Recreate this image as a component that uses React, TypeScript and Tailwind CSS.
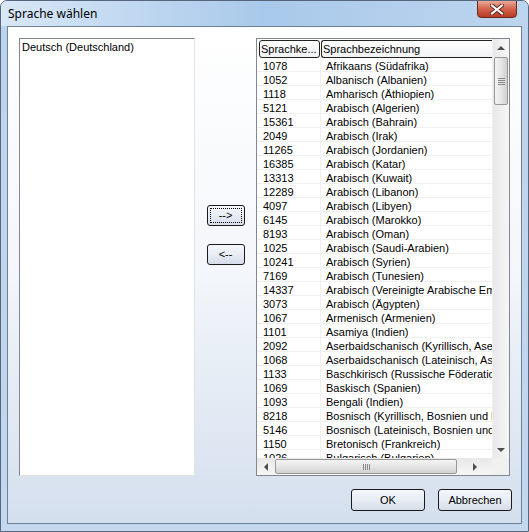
import React from "react";

const rows: [string, string][] = [
  ["1078", "Afrikaans (Südafrika)"],
  ["1052", "Albanisch (Albanien)"],
  ["1118", "Amharisch (Äthiopien)"],
  ["5121", "Arabisch (Algerien)"],
  ["15361", "Arabisch (Bahrain)"],
  ["2049", "Arabisch (Irak)"],
  ["11265", "Arabisch (Jordanien)"],
  ["16385", "Arabisch (Katar)"],
  ["13313", "Arabisch (Kuwait)"],
  ["12289", "Arabisch (Libanon)"],
  ["4097", "Arabisch (Libyen)"],
  ["6145", "Arabisch (Marokko)"],
  ["8193", "Arabisch (Oman)"],
  ["1025", "Arabisch (Saudi-Arabien)"],
  ["10241", "Arabisch (Syrien)"],
  ["7169", "Arabisch (Tunesien)"],
  ["14337", "Arabisch (Vereinigte Arabische Emirate)"],
  ["3073", "Arabisch (Ägypten)"],
  ["1067", "Armenisch (Armenien)"],
  ["1101", "Asamiya (Indien)"],
  ["2092", "Aserbaidschanisch (Kyrillisch, Aserbaidschan)"],
  ["1068", "Aserbaidschanisch (Lateinisch, Aserbaidschan)"],
  ["1133", "Baschkirisch (Russische Föderation)"],
  ["1069", "Baskisch (Spanien)"],
  ["1093", "Bengali (Indien)"],
  ["8218", "Bosnisch (Kyrillisch, Bosnien und H..."],
  ["5146", "Bosnisch (Lateinisch, Bosnien und ..."],
  ["1150", "Bretonisch (Frankreich)"],
  ["1026", "Bulgarisch (Bulgarien)"],
];

const font = { fontFamily: '"Liberation Sans", Arial, sans-serif' };

function WinButton({ label, focus, w, h }: { label: string; focus?: boolean; w: string; h: string }) {
  return (
    <div
      className={`${w} ${h} relative flex items-center justify-center rounded-[3px] border border-[#1a1a1a] bg-linear-to-b from-[#f4f7fb] via-[#e8edf4] to-[#d6dde8] text-[11px] text-black shrink-0`}
    >
      {focus && <div className="absolute inset-[2px] rounded-[1px] border border-dotted border-black" />}
      <span className="relative">{label}</span>
    </div>
  );
}

function Arrow({ dir }: { dir: "up" | "down" | "left" | "right" }) {
  const pts =
    dir === "up"
      ? "0,4 4,0 8,4"
      : dir === "down"
      ? "0,0 8,0 4,4"
      : dir === "left"
      ? "4,0 4,8 0,4"
      : "0,0 0,8 4,4";
  const w = dir === "up" || dir === "down" ? 8 : 4;
  const h = dir === "up" || dir === "down" ? 4 : 8;
  return (
    <svg width={w} height={h} viewBox={`0 0 ${w} ${h}`}>
      <polygon points={pts} fill="#4d4d4d" />
    </svg>
  );
}

export default function App() {
  return (
    <div className="w-[529px] h-[532px] bg-white" style={font}>
      <div className="w-[529px] h-[532px] flex flex-col rounded-t-[7px] border border-[#55667d] bg-linear-to-b from-[#bcd4ec] to-[#c3d7ee] overflow-hidden">
        {/* Title bar */}
        <div className="h-[25px] flex items-start bg-linear-to-r from-[#d8e7f6] via-[#a9c9ea] to-[#bdd5ee] shrink-0">
          <div className="pl-[7px] pt-[5px] text-[12px] text-black leading-[15px]" style={{ fontFamily: '"Noto Sans", "Open Sans", sans-serif' }}>
            Sprache wählen
          </div>
          <div className="flex-1" />
          <div className="mr-[11px] -mt-px w-[40px] h-[18px] rounded-b-[4px] border border-[#6b2a1e] bg-linear-to-b from-[#e9a998] via-[#d2634c] to-[#b83a24] flex items-center justify-center">
            <svg width="14" height="11" viewBox="0 0 14 11">
              <path d="M2 1.5 L12 9.5 M12 1.5 L2 9.5" stroke="#5a2218" strokeWidth="4" strokeLinecap="square" />
              <path d="M2 1.5 L12 9.5 M12 1.5 L2 9.5" stroke="#ffffff" strokeWidth="2.2" strokeLinecap="square" />
            </svg>
          </div>
        </div>

        {/* Client area */}
        <div className="flex-1 mx-[6px] mb-[7px] border border-[#6f8199] bg-linear-to-b from-white via-[#f3f6fa] to-[#d4dfee] flex flex-col pt-[11px] pl-[11px] pr-[9px]">
          <div className="flex h-[438px]">
            {/* Left listbox */}
            <div className="w-[176px] h-full shrink-0 bg-white border border-t-[#828790] border-l-[#828790] border-r-[#e3e3e3] border-b-[#e3e3e3] pl-[2px] pt-[2px] text-[11px] leading-[13px] text-black">
              Deutsch (Deutschland)
            </div>

            {/* Middle buttons */}
            <div className="w-[61px] shrink-0 flex flex-col items-center pt-[167px] gap-[18px]">
              <WinButton label="-->" focus w="w-[38px]" h="h-[21px]" />
              <WinButton label="<--" w="w-[38px]" h="h-[21px]" />
            </div>

            {/* Right listview */}
            <div className="w-[254px] shrink-0 h-full bg-white border border-[#828790] flex flex-col">
              <div className="flex flex-1 min-h-0">
                <div className="w-[235px] flex flex-col overflow-hidden">
                  {/* Header */}
                  <div className="h-[19px] flex items-start pt-px shrink-0 text-[11px] text-black">
                    <div className="w-[64px] shrink-0 pl-[2px] pr-px">
                      <div className="h-[18px] rounded-[3px] border border-[#222] bg-linear-to-b from-white to-[#f1f2f4] pl-[1px] leading-[16px] whitespace-nowrap overflow-hidden">
                        Sprachke...
                      </div>
                    </div>
                    <div className="w-[174px] shrink-0 h-[18px] rounded-l-[3px] border border-r-0 border-[#222] bg-linear-to-b from-white to-[#f1f2f4] pl-px leading-[16px] whitespace-nowrap">
                      Sprachbezeichnung
                    </div>
                  </div>
                  {/* Rows */}
                  <div className="flex-1 overflow-hidden">
                    {rows.map(([code, name]) => (
                      <div key={code} className="h-[14px] flex border-b border-[#f0f0f0] text-[11px] leading-[16px] text-black whitespace-nowrap">
                        <div className="w-[64px] pl-[6px] border-r border-[#f0f0f0] shrink-0">{code}</div>
                        <div className="pl-[5px] overflow-x-clip">{name}</div>
                      </div>
                    ))}
                  </div>
                </div>
                {/* Vertical scrollbar */}
                <div className="w-[17px] flex flex-col bg-linear-to-r from-[#e8e8e8] to-[#f6f6f6] border-l border-[#f0f0f0]">
                  <div className="h-[18px] flex items-center justify-center">
                    <Arrow dir="up" />
                  </div>
                  <div className="flex-1 px-[1px]">
                    <div className="h-[48px] rounded-[2px] border border-[#979797] bg-linear-to-r from-[#f4f4f4] via-[#e6e6e6] to-[#d0d0d0] flex flex-col items-center justify-center gap-[1px]">
                      <div className="w-[7px] h-px bg-[#8a8a8a]" />
                      <div className="w-[7px] h-px bg-[#8a8a8a]" />
                      <div className="w-[7px] h-px bg-[#8a8a8a]" />
                      <div className="w-[7px] h-px bg-[#8a8a8a]" />
                    </div>
                  </div>
                  <div className="h-[17px] flex items-center justify-center">
                    <Arrow dir="down" />
                  </div>
                </div>
              </div>
              {/* Horizontal scrollbar */}
              <div className="h-[17px] flex shrink-0">
                <div className="w-[235px] flex items-center bg-linear-to-b from-[#e8e8e8] to-[#f6f6f6]">
                  <div className="w-[18px] flex items-center justify-center">
                    <Arrow dir="left" />
                  </div>
                  <div className="w-[182px] h-[15px] rounded-[2px] border border-[#979797] bg-linear-to-b from-[#f4f4f4] via-[#e6e6e6] to-[#d0d0d0] flex items-center justify-center gap-[1px]">
                    <div className="w-px h-[6px] bg-[#8a8a8a]" />
                    <div className="w-px h-[6px] bg-[#8a8a8a]" />
                    <div className="w-px h-[6px] bg-[#8a8a8a]" />
                    <div className="w-px h-[6px] bg-[#8a8a8a]" />
                  </div>
                  <div className="flex-1 flex items-center justify-center">
                    <Arrow dir="right" />
                  </div>
                </div>
                <div className="w-[17px] bg-[#f0f0f0]" />
              </div>
            </div>
          </div>

          {/* Bottom buttons */}
          <div className="flex justify-end gap-[13px] mt-[13px]">
            <WinButton label="OK" w="w-[74px]" h="h-[22px]" />
            <WinButton label="Abbrechen" w="w-[74px]" h="h-[22px]" />
          </div>
        </div>
      </div>
    </div>
  );
}
